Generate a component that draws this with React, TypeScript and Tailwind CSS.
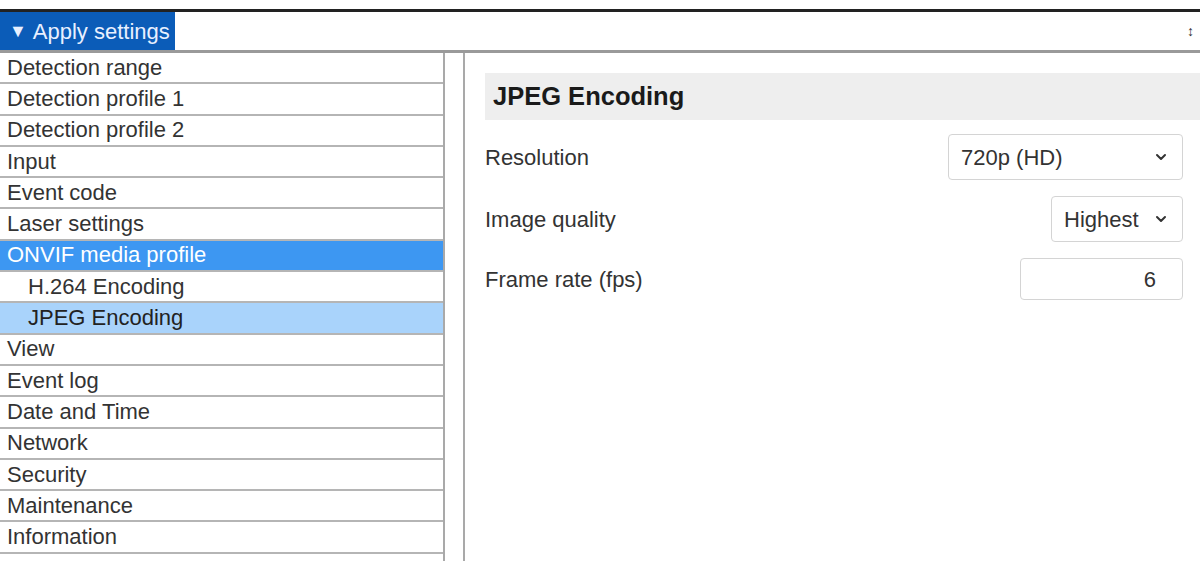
import React from 'react';

const items: { label: string; sub?: boolean; state?: 'active' | 'current' }[] = [
    { label: 'Detection range' },
    { label: 'Detection profile 1' },
    { label: 'Detection profile 2' },
    { label: 'Input' },
    { label: 'Event code' },
    { label: 'Laser settings' },
    { label: 'ONVIF media profile', state: 'active' },
    { label: 'H.264 Encoding', sub: true },
    { label: 'JPEG Encoding', sub: true, state: 'current' },
    { label: 'View' },
    { label: 'Event log' },
    { label: 'Date and Time' },
    { label: 'Network' },
    { label: 'Security' },
    { label: 'Maintenance' },
    { label: 'Information' },
];

const Chevron = () => (
    <svg width="16" height="16" viewBox="0 0 24 24" fill="none" stroke="#333" strokeWidth="3" strokeLinecap="round" strokeLinejoin="round">
        <path d="M6 9l6 6 6-6" />
    </svg>
);

const Menu: React.FC = () => (
    <div className="w-[445px] flex-shrink-0 border-r-2 border-[#a9a9a9] h-full">
        {items.map((it) => {
            const cls =
                it.state === 'active'
                    ? 'bg-[#3d97f2] text-white'
                    : it.state === 'current'
                    ? 'bg-[#a9d3fb] text-[#222]'
                    : 'bg-white text-[#333]';
            return (
                <div
                    key={it.label}
                    className={`h-[31.3px] flex items-center border-b-2 border-[#b5b5b5] text-[22px] leading-none ${it.sub ? 'pl-[28px]' : 'pl-[7px]'} ${cls}`}
                >
                    {it.label}
                </div>
            );
        })}
    </div>
);

const Row: React.FC<{ label: string; h: string; children: React.ReactNode }> = ({ label, h, children }) => (
    <div className={`flex items-center justify-between ${h}`}>
        <span className="text-[22px] text-[#333]">{label}</span>
        {children}
    </div>
);

const Settings: React.FC = () => (
    <div className="flex-1 border-l-2 border-[#a9a9a9] ml-[18px] pt-[20px] pl-[20px] pr-[17px] h-full">
        <div className="bg-[#eeeeee] h-[47px] flex items-center pl-[8px] -mr-[17px]">
            <span className="text-[25.5px] font-bold text-[#1a1a1a]">JPEG Encoding</span>
        </div>
        <div className="mt-[14px] flex flex-col gap-[16px]">
            <Row label="Resolution" h="h-[46px]">
                <div className="w-[235px] h-[46px] border border-[#d4d4d4] rounded-[4px] flex items-center justify-between pl-[12px] pr-[13px] text-[22px] text-[#333]">
                    <span>720p (HD)</span>
                    <Chevron />
                </div>
            </Row>
            <Row label="Image quality" h="h-[46px]">
                <div className="w-[132px] h-[46px] border border-[#d4d4d4] rounded-[4px] flex items-center justify-between pl-[12px] pr-[13px] text-[22px] text-[#333]">
                    <span>Highest</span>
                    <Chevron />
                </div>
            </Row>
            <Row label="Frame rate (fps)" h="h-[42px]">
                <div className="w-[163px] h-[42px] border border-[#d4d4d4] rounded-[4px] flex items-center justify-end pr-[26px] text-[22px] text-[#333]">
                    6
                </div>
            </Row>
        </div>
    </div>
);

const App: React.FC = () => {
    return (
        <div className="w-[1200px] h-[561px] bg-white overflow-hidden flex flex-col font-[Liberation_Sans,Arial,sans-serif]">
            <div className="h-[9px]" />
            <div className="border-t-[3px] border-[#222] border-b-[3px] border-b-[#9a9a9a] h-[44px] flex items-stretch justify-between">
                <div className="bg-[#0b5cb8] text-[#e8f0ff] text-[22px] flex items-center pl-[9px] w-[175px]">
                    <span className="text-[18px] mr-[6px]">▼</span>
                    Apply settings
                </div>
                <div className="flex items-center pr-[6px] text-[14px] text-[#333] font-bold">↕</div>
            </div>
            <div className="flex flex-1 min-h-0">
                <Menu />
                <Settings />
            </div>
        </div>
    );
};

export default App;
